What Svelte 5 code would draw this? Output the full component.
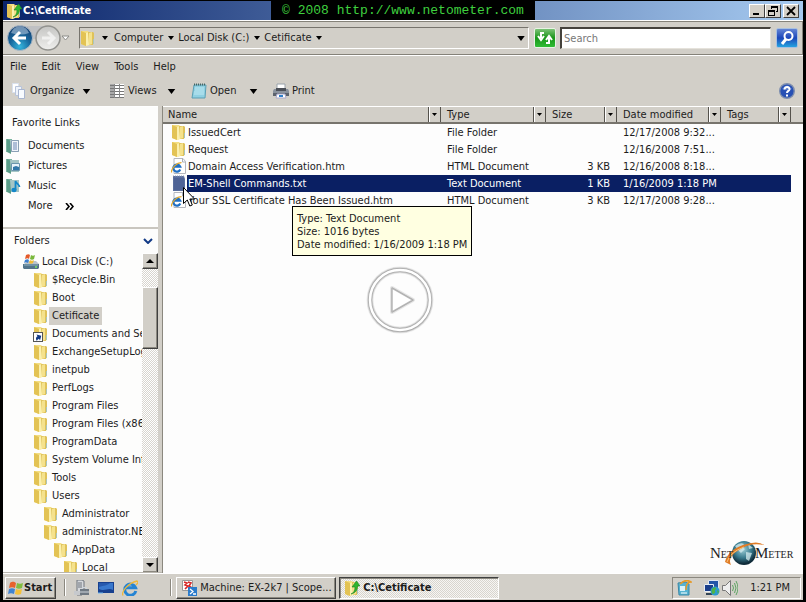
<script lang="ts">
  const menus = ['File', 'Edit', 'View', 'Tools', 'Help'];
  const crumbs = ['Computer', 'Local Disk (C:)', 'Cetificate'];

  const columns = [
    { label: 'Name', cls: 'name' },
    { label: 'Type', cls: 'type' },
    { label: 'Size', cls: 'size' },
    { label: 'Date modified', cls: 'date' },
    { label: 'Tags', cls: 'tags' },
  ];

  const files = [
    { name: 'IssuedCert', icon: 'folder', type: 'File Folder', size: '', date: '12/17/2008 9:32...' },
    { name: 'Request', icon: 'folder', type: 'File Folder', size: '', date: '12/16/2008 7:51...' },
    { name: 'Domain Access Verification.htm', icon: 'html', type: 'HTML Document', size: '3 KB', date: '12/16/2008 8:18...' },
    { name: 'EM-Shell Commands.txt', icon: 'text', type: 'Text Document', size: '1 KB', date: '1/16/2009 1:18 PM' },
    { name: 'Your SSL Certificate Has Been Issued.htm', icon: 'html', type: 'HTML Document', size: '3 KB', date: '12/17/2008 9:28...' },
  ];

  const tree = [
    { name: 'Local Disk (C:)', level: 0, icon: 'drive' },
    { name: '$Recycle.Bin', level: 1, icon: 'folder' },
    { name: 'Boot', level: 1, icon: 'folder' },
    { name: 'Cetificate', level: 1, icon: 'folder' },
    { name: 'Documents and Se', level: 1, icon: 'shortcut' },
    { name: 'ExchangeSetupLog', level: 1, icon: 'folder' },
    { name: 'inetpub', level: 1, icon: 'folder' },
    { name: 'PerfLogs', level: 1, icon: 'folder' },
    { name: 'Program Files', level: 1, icon: 'folder' },
    { name: 'Program Files (x86', level: 1, icon: 'folder' },
    { name: 'ProgramData', level: 1, icon: 'folder' },
    { name: 'System Volume Inf', level: 1, icon: 'folder' },
    { name: 'Tools', level: 1, icon: 'folder' },
    { name: 'Users', level: 1, icon: 'folder' },
    { name: 'Administrator', level: 2, icon: 'folder' },
    { name: 'administrator.NE', level: 2, icon: 'folder' },
    { name: 'AppData', level: 3, icon: 'folder' },
    { name: 'Local', level: 4, icon: 'folder' },
  ];

  let selected = $state('EM-Shell Commands.txt');
  let current = $state('Cetificate');
  let query = $state('');
</script>

{#snippet icon(kind: string)}
  <svg class="icon" width="16" height="16" viewBox="0 0 16 16" aria-hidden="true">
    {#if kind === 'folder' || kind === 'shortcut' || kind === 'folderup'}
      <path d="M1 1h7l1 1v13l-3 1-5-2z" fill="#f3de83" />
      <path d="M1 1l5 2v13l-5-2z" fill="#e3c354" />
      <path d="M6 3l3-1v13l-3 1z" fill="#fbf0ae" />
      <path d="M8 2h5l1 1v8l-1 4H9z" fill="#dfc25a" />
      <path d="M9 3l3-1v12l-3 1z" fill="#f5e28c" />
      <path d="M13 9h1v5h-1z" fill="#a9c5bd" />
      {#if kind === 'shortcut'}
        <rect x="0.5" y="6.5" width="9" height="9" fill="#fff" stroke="#555" />
        <path d="M2 14c0-3 1-4 3-4V8l3.500 3.500L5 15v-2c-1.500 0-2 0-3 1z" fill="#123a86" transform="rotate(-30 5 11)" />
      {/if}
      {#if kind === 'folderup'}
        <path d="M7 14c3-1 4-4 4-7H8l4.500-6L16 6h-2.500c0 4-2 7-6.500 8z" fill="#2fb52f" stroke="#1a8420" stroke-width="0.6" />
      {/if}
    {:else if kind === 'html'}
      <path d="M3 .5h9l2.500 3V15.500H3z" fill="#fff" stroke="#b4b7be" />
      <path d="M11.500 .5v3.500h3" fill="none" stroke="#a9adb5" />
      <path d="M9.200 11.500A3.600 3.600 0 1 1 9.200 8.700H3" fill="none" stroke="#1f6fc4" stroke-width="2.200" />
      <path d="M.5 14.500C0 10 6 4.500 10.500 4.700" fill="none" stroke="#e3a92d" stroke-width="1.200" />
    {:else if kind === 'text'}
      <path d="M2 1h11l1 3v12H2z" fill="#5b6f9e" />
      <path d="M3 4h10M3 6h10M3 8h10M3 10h10M3 12h10M3 14h10" stroke="#42588d" />
      <path d="M2 1h11" stroke="#8a98b8" stroke-dasharray="1 1" />
    {:else if kind === 'drive'}
      <path d="M1 10l3-3h9l3 3z" fill="#b9c3cc" />
      <path d="M0 10h16v4l-1 1H1l-1-1z" fill="#52748a" />
      <path d="M1 11h14" stroke="#8fb0bf" />
      <path d="M12 13h2" stroke="#7be35c" stroke-width="1.500" />
      <path d="M3 1c2-1 3-1 4 0L6 5C5 4 4 4 2 5z" fill="#e45a2a" />
      <path d="M8 1c1 1 3 1 4 0l-1 4c-1 1-3 1-4 0z" fill="#79b83b" />
      <path d="M2 6c2-1 3-1 4 0l-1 3c-1-1-3-1-4 0z" fill="#3a7fd0" />
      <path d="M7 6c1 1 3 1 4 0l-1 3c-1 1-3 1-4 0z" fill="#f1bd34" />
    {:else if kind === 'documents' || kind === 'pictures' || kind === 'music'}
      <path d="M0 1h6v13H0z" fill="#7ab5a0" />
      <path d="M1 1l4 2v13l-4-2z" fill="#5a9c89" />
      <path d="M4 2h9v12H5z" fill="#a4c5c5" />
      {#if kind === 'documents'}
        <path d="M5.500 2.500h7v11h-7z" fill="#f1f5fa" stroke="#8aa0b5" />
        <path d="M7 5h4M7 7h4M7 9h4M7 11h4" stroke="#6d86b4" />
      {:else if kind === 'pictures'}
        <path d="M5.500 5.500h8v7h-8z" fill="#e8f3fa" stroke="#6b96ad" />
        <path d="M7 9l3-1 3 1v3H7z" fill="#3278a9" />
      {:else}
        <path d="M9.500 12V3c1 3 4 3 4 6" fill="none" stroke="#1487c9" stroke-width="1.800" />
        <ellipse cx="8" cy="12" rx="2.600" ry="2.200" fill="#1487c9" />
      {/if}
    {:else if kind === 'organize'}
      <path d="M1.500.5h6v9h-6z" fill="#fff" stroke="#d9e1ee" />
      <path d="M4.500 3.500h6v9h-6z" fill="#eef3fb" stroke="#b8c4da" />
      <path d="M7.500 6.500h6v9h-6z" fill="#f8fbff" stroke="#a9b6d0" />
    {:else if kind === 'views'}
      <path d="M1 1h4v14H1z" fill="#aaa" />
      <path d="M6 1h9v14H6z" fill="#fff" />
      <path d="M1 2.500h14M1 5.500h14M1 8.500h14M1 11.500h14M1 14.500h14" stroke="#777" />
      <path d="M5.500 1v14M10.500 1v14" stroke="#888" />
    {:else if kind === 'open'}
      <path d="M3 2h12l-1 13H1z" fill="#8fd0e2" stroke="#5b9fb4" />
      <path d="M4 5h9M4 7h9M3 9h10M3 11h10" stroke="#bfe8f2" />
      <path d="M3 1.500h12" stroke="#466" stroke-width="2" stroke-dasharray="1 1" />
    {:else if kind === 'print'}
      <path d="M4 1h8v6H4z" fill="#fff" stroke="#9aa3ac" />
      <path d="M1 6h14l1 2v5H0V8z" fill="#8a929d" />
      <path d="M0 10h16v3H0z" fill="#5c636d" />
      <path d="M3 5h10v3H3z" fill="#4b5058" />
      <path d="M4 11h8l1 4H3z" fill="#fff" stroke="#aac" />
      <path d="M6 13h4" stroke="#2f7fca" stroke-width="2" />
    {:else if kind === 'server'}
      <path d="M3 0h5l2 1v12l-2 2H3z" fill="#d5d8dc" stroke="#6e747c" />
      <path d="M4 3h4M4 5h4M4 7h4" stroke="#6e747c" />
      <path d="M0 11h6v4H0z" fill="#c6c9cd" />
      <path d="M6 9h9v6H6z" fill="#6e7882" />
      <path d="M8.500 9V7.500h4V9M6 12h9" fill="none" stroke="#cfd6dd" />
    {:else if kind === 'desktop'}
      <path d="M0 2h16v11H0z" fill="#17408f" />
      <path d="M1 3h14v7c-5-3-8 2-14-1z" fill="#3978cd" />
      <path d="M1 3h11c-3 3-6 2-11 4z" fill="#2759ad" />
      <path d="M0 13h5" stroke="#6fb8f0" />
    {:else if kind === 'ie'}
      <path d="M13.800 11A5.600 5.600 0 1 1 13.600 7.800H4" fill="none" stroke="#2584d3" stroke-width="3" />
      <path d="M1 15.500C-1 12 6 3 15 1c2 1 0 3-1 4" fill="none" stroke="#eeb83a" stroke-width="1.300" />
    {:else if kind === 'exchange'}
      <path d="M1.500.5h10v10h-10z" fill="#fff" stroke="#999" />
      <path d="M3 2l3 1-2 2 3 1-3 3M7 2l3 1-2 3 3 2" fill="none" stroke="#d72626" stroke-width="1.600" />
      <path d="M7 7h9v9H7z" fill="#2a7bcb" />
      <path d="M9 9l3 2.500L9 14M12 14h3" fill="none" stroke="#fff" stroke-width="1.300" />
    {:else if kind === 'update'}
      <path d="M2 3l8-1 3 2v11H3z" fill="#57b3d1" stroke="#3987a7" />
      <path d="M4 6h5v5H4z" fill="#d9f3fb" />
      <path d="M5 13h6" stroke="#fff" />
      <path d="M4 4c4-4 8-4 11-2-4 0-5 3-5 8" fill="none" stroke="#e59a28" stroke-width="1.600" />
    {:else if kind === 'network'}
      <path d="M4.500.5h10v8h-10z" fill="#2355a8" stroke="#dfe7f2" />
      <path d="M.5 4.500h9v7h-9z" fill="#1b3f8b" stroke="#e6edf5" />
      <path d="M2 14h7" stroke="#345" stroke-width="2" />
      <circle cx="11" cy="11" r="4.500" fill="#2a9bd1" />
      <path d="M8 9c2-2 3-2 4-1s-2 2-1 3-1 3-2 3-2-3-1-5zM13 10l2 1-1 3z" fill="#4fb347" />
    {:else if kind === 'sound'}
      <path d="M.5 5.500h3l5-5v15l-5-5h-3z" fill="#eee" stroke="#777" />
      <path d="M10.500 5q2 3 0 6M12.500 3q3 5 0 10M14 1q4 7 0 14" fill="none" stroke="#5da562" />
    {:else if kind === 'flag'}
      <path d="M2 3c3-2 4-1 6 0L7 8C5 7 3 7 1 8z" fill="#e7622d" />
      <path d="M9 3c2 1 4 1 6 0l-1 5c-2 1-4 1-6 0z" fill="#82bc40" />
      <path d="M1 9c2-1 4-1 6 0l-1 5c-2-1-4-1-6 0z" fill="#3f83d2" />
      <path d="M8 9c2 1 4 1 6 0l-1 5c-2 1-4 1-6 0z" fill="#f4c03b" />
    {/if}
  </svg>
{/snippet}

{#snippet caret()}
  <svg class="caret" width="6" height="4" viewBox="0 0 6 4" aria-hidden="true"><path d="M0 0h6L3 4z" /></svg>
{/snippet}

<div class="screen">
  <header class="titlebar">
    {@render icon('folderup')}
    <h1>C:\Cetificate</h1>
    <div class="window-buttons">
      <button aria-label="Minimize"><svg width="12" height="10"><path d="M2 7h6v2H2z" /></svg></button>
      <button aria-label="Restore"><svg width="12" height="10"><path d="M4 0h7v6H9V5h1V2H5v1H4zM1 4h7v6H1zM2 6v3h5V6z" fill-rule="evenodd" /></svg></button>
      <button class="close" aria-label="Close"><svg width="12" height="10"><path d="M2 1l8 8M10 1L2 9" stroke="#000" stroke-width="1.800" /></svg></button>
    </div>
    <p class="watermark">© 2008 http://www.netometer.com</p>
  </header>

  <nav class="address">
    <div class="history">
      <svg width="66" height="28" viewBox="0 0 66 28" aria-hidden="true">
        <defs>
          <radialGradient id="back" cx="50%" cy="85%" r="85%">
            <stop offset="0" stop-color="#35b5dd" />
            <stop offset=".5" stop-color="#17669c" />
            <stop offset="1" stop-color="#143c6c" />
          </radialGradient>
          <linearGradient id="forward" x2="0" y2="1">
            <stop offset="0" stop-color="#c5c5c3" />
            <stop offset="1" stop-color="#efefed" />
          </linearGradient>
        </defs>
        <path d="M10 2h34v3q-14 2-14 10H10z" fill="#bfc0c2" />
        <circle cx="13" cy="14" r="12.500" fill="url(#back)" stroke="#aebac6" />
        <path d="M4 9q2-6 9-7 7 1 9 7-8 3-18 0z" fill="#bcd2e5" opacity=".55" />
        <path d="M19 14H8M13 8l-6 6 6 6" fill="none" stroke="#fff" stroke-width="3" />
        <circle cx="41" cy="14" r="12" fill="url(#forward)" stroke="#92928e" stroke-width="1.500" />
        <path d="M35 14h11M41 8l6 6-6 6" fill="none" stroke="#fff" stroke-width="3" opacity=".6" />
        <path d="M55 12h7l-3.500 4z" fill="#fff" stroke="#8c8c88" />
      </svg>
    </div>
    <div class="breadcrumb">
      {@render icon('folder')}
      <button class="drop" aria-label="Root locations">{@render caret()}</button>
      {#each crumbs as crumb}
        <a href="#{crumb}">{crumb}</a>
        <button class="drop" aria-label="Open {crumb}">{@render caret()}</button>
      {/each}
      <button class="drop last" aria-label="Previous locations">{@render caret()}</button>
    </div>
    <button class="refresh" aria-label="Refresh">
      <svg width="20" height="18" viewBox="0 0 20 18"><path d="M9 4H6v5M3 7l3 4 3-4M11 14h3V9M11 11l3-4 3 4" fill="none" stroke="#fff" stroke-width="2" /></svg>
    </button>
    <input class="search" type="text" placeholder="Search" aria-label="Search" bind:value={query} />
    <button class="go" aria-label="Start search">
      <svg width="20" height="18" viewBox="0 0 20 18"><circle cx="11.500" cy="7" r="4" fill="none" stroke="#fff" stroke-width="2" /><path d="M9 10l-4 5" stroke="#fff" stroke-width="3" /></svg>
    </button>
  </nav>

  <div class="menubar">
    {#each menus as menu}
      <button>{menu}</button>
    {/each}
  </div>

  <div class="toolbar">
    <button class="tool wide">{@render icon('organize')}<span>Organize</span>{@render caret()}</button>
    <button class="tool">{@render icon('views')}<span>Views</span>{@render caret()}</button>
    <button class="tool">{@render icon('open')}<span>Open</span>{@render caret()}</button>
    <button class="tool">{@render icon('print')}<span>Print</span></button>
    <button class="help" aria-label="Help">
      <svg width="16" height="16" viewBox="0 0 16 16"><circle cx="8" cy="8" r="7.300" fill="#2750b4" stroke="#7d8eae" stroke-width="1.400" /><path d="M3 6q5-7 10 0-5 2-10 0z" fill="#7498dc" opacity=".6" /><path d="M5.500 6.500C5.500 3 11 3.500 10.500 6.500 10 8 8 8 8 10M8 11.500v2" fill="none" stroke="#fff" stroke-width="2" /></svg>
    </button>
  </div>

  <main>
    <aside>
      <section class="favorites">
        <h2>Favorite Links</h2>
        <ul>
          <li>{@render icon('documents')}<a href="#documents">Documents</a></li>
          <li>{@render icon('pictures')}<a href="#pictures">Pictures</a></li>
          <li>{@render icon('music')}<a href="#music">Music</a></li>
          <li class="more">
            <a href="#more">More</a>
            <svg width="9" height="7" viewBox="0 0 9 7" aria-hidden="true"><path d="M1 0l3 3.500L1 7M5 0l3 3.500L5 7" fill="none" stroke="#000" stroke-width="1.600" /></svg>
          </li>
        </ul>
      </section>
      <button class="folders-toggle">
        <span>Folders</span>
        <svg width="10" height="6" viewBox="0 0 10 6" aria-hidden="true"><path d="M1 1l4 4 4-4" fill="none" stroke="#123a86" stroke-width="2" /></svg>
      </button>
      <div class="tree-wrap">
        <ul class="tree">
          {#each tree as node}
            <li class="level-{node.level}">
              {@render icon(node.icon)}
              <button class:current={node.name === current} onclick={() => (current = node.name)}>{node.name}</button>
            </li>
          {/each}
        </ul>
        <div class="scrollbar">
          <button aria-label="Scroll up"><svg width="8" height="4"><path d="M0 4h8L4 0z" /></svg></button>
          <div class="track"><div class="thumb"></div></div>
          <button aria-label="Scroll down"><svg width="8" height="4"><path d="M0 0h8L4 4z" /></svg></button>
        </div>
      </div>
    </aside>

    <section class="list">
      <table>
        <thead>
          <tr>
            {#each columns as col}
              <th class={col.cls}>
                <div class="head">
                  <span>{col.label}</span>
                  <button aria-label="Filter {col.label}"><svg width="5" height="3"><path d="M0 0h5L2.500 3z" /></svg></button>
                </div>
              </th>
            {/each}
            <th><div class="head"></div></th>
          </tr>
        </thead>
        <tbody>
          {#each files as file}
            <tr class:selected={file.name === selected} onclick={() => (selected = file.name)}>
              <td><div class="file">{@render icon(file.icon)}<span>{file.name}</span></div></td>
              <td>{file.type}</td>
              <td class="size">{file.size}</td>
              <td class="date">{file.date}</td>
              <td></td>
              <td class="rest"></td>
            </tr>
          {/each}
        </tbody>
      </table>

      <div class="tooltip" role="tooltip">
        <p>Type: Text Document</p>
        <p>Size: 1016 bytes</p>
        <p>Date modified: 1/16/2009 1:18 PM</p>
      </div>

      <svg class="cursor" width="12" height="20" viewBox="0 0 12 20" aria-hidden="true">
        <path d="M.5.500v16l3.800-3.500 2.500 6 2.500-1-2.500-6h4.700z" fill="#fff" stroke="#000" />
      </svg>

      <svg class="logo" width="84" height="30" viewBox="0 0 84 30" role="img" aria-label="NetoMeter">
        <defs>
          <radialGradient id="globe" cx="45%" cy="35%" r="60%">
            <stop offset="0" stop-color="#9fd0d8" />
            <stop offset=".6" stop-color="#38798c" />
            <stop offset="1" stop-color="#0e2a38" />
          </radialGradient>
        </defs>
        <circle cx="34" cy="14" r="12" fill="url(#globe)" />
        <path d="M25 7q5-4 9-2l-2 3 3 2-4 4-3-3zM36 13l6 1-3 8-3-2zM38 5l5 4-4 1z" fill="#d7eef0" opacity=".75" />
        <path d="M15 23q2-11 18-17 15-5 21 0-14-3-25 5Q17 18 21 26z" fill="#e07c26" />
        <path d="M17 23q3-10 17-15" fill="none" stroke="#f9c37c" />
        <text x="0" y="19" class="logo-text">N<tspan class="logo-small">ET</tspan></text>
        <text x="45" y="19" class="logo-text">M<tspan class="logo-small">ETER</tspan></text>
      </svg>
    </section>
  </main>

  <footer class="taskbar">
    <button class="start">{@render icon('flag')}Start</button>
    <div class="divider"></div>
    <div class="quick">
      <button aria-label="Server Manager">{@render icon('server')}</button>
      <button aria-label="Show desktop">{@render icon('desktop')}</button>
      <button aria-label="Internet Explorer">{@render icon('ie')}</button>
    </div>
    <div class="divider end"></div>
    <button class="task">{@render icon('exchange')}<span>Machine: EX-2k7 | Scope...</span></button>
    <button class="task active">{@render icon('folderup')}<span>C:\Cetificate</span></button>
    <div class="tray">
      {@render icon('update')}
      <span class="pair">{@render icon('network')}{@render icon('sound')}</span>
      <time>1:21 PM</time>
    </div>
  </footer>

  <div class="player">
    <button aria-label="Play">
      <svg width="72" height="72" viewBox="0 0 72 72">
        <g fill="none" stroke="#888">
          <circle cx="36" cy="36" r="30" stroke-width="7" opacity=".15" />
          <circle cx="36" cy="36" r="30" stroke-width="5.500" opacity=".3" />
          <circle cx="36" cy="36" r="30" stroke-width="4" opacity=".5" />
          <circle cx="36" cy="36" r="30" stroke="#fff" stroke-width="2.500" />
          <path d="M28 24v24l21-12z" stroke-width="4" opacity=".2" stroke-linejoin="round" />
        </g>
        <path d="M28 24v24l21-12z" fill="#fff" stroke="#888" stroke-opacity=".6" stroke-width="1.500" stroke-linejoin="round" />
      </svg>
    </button>
  </div>
</div>

<style>
:global(body) {
  margin: 0;
  background: #000;
}

.screen {
  position: relative;
  display: flex;
  flex-direction: column;
  box-sizing: border-box;
  height: 100vh;
  padding: 1px 3px 2px;
  background: #000;
  color: #1c1c1c;
  font: 11px/14px "DejaVu Sans Condensed", "Noto Sans", sans-serif;
}

button {
  padding: 0;
  border: 0;
  background: none;
  color: inherit;
  font: inherit;
}

h1, h2, p, ul {
  margin: 0;
  padding: 0;
  font: inherit;
  list-style: none;
}

a {
  color: inherit;
  text-decoration: none;
}

svg {
  display: block;
  flex: none;
}

.titlebar {
  position: relative;
  display: flex;
  align-items: center;
  flex: none;
  height: 19px;
  padding: 0 4px 0 3px;
  background: linear-gradient(90deg, #0a246a, #a6caf0);
}

.titlebar h1 {
  flex: 1;
  padding-left: 1px;
  color: #fff;
  font-weight: bold;
}

.window-buttons {
  display: flex;
}

.window-buttons button {
  display: flex;
  align-items: center;
  justify-content: center;
  width: 16px;
  height: 14px;
  box-sizing: border-box;
  border: 1px solid;
  border-color: #fff #404040 #404040 #fff;
  background: #d4d0c8;
}

.window-buttons .close {
  margin-left: 2px;
}

.watermark {
  position: absolute;
  top: -1px;
  left: calc(50% - 132px);
  width: 264px;
  height: 20px;
  background: #000;
  color: #3fd03f;
  font: 13px/22px "Liberation Mono", monospace;
  text-align: center;
  white-space: nowrap;
}

.address {
  display: flex;
  align-items: center;
  flex: none;
  box-sizing: border-box;
  height: 36px;
  padding: 0 5px 0 4px;
  border-top: 1px solid #fff;
  border-bottom: 1px solid #fff;
  background: #d2cfc8;
  box-shadow: inset 0 1px #858279, inset 0 -1px #858279, inset -1px 0 #858279;
}

.history {
  width: 72px;
}

.breadcrumb {
  display: flex;
  align-items: center;
  flex: 1;
  min-width: 0;
  box-sizing: border-box;
  height: 22px;
  border: 1px solid;
  border-color: #77746d #fff #fff #77746d;
  white-space: nowrap;
}

.drop {
  display: flex;
  justify-content: center;
  width: 15px;
}

.breadcrumb > .icon + .drop {
  width: 18px;
}

.drop.last {
  margin-left: auto;
}

.drop.last .caret {
  width: 8px;
  height: 5px;
}

.refresh,
.go {
  display: flex;
  align-items: center;
  justify-content: center;
  box-sizing: border-box;
  width: 22px;
  height: 20px;
  margin-left: 5px;
  border: 1px solid #e8f2e4;
  border-radius: 2px;
  background: linear-gradient(#7cc276, #189518 50%, #30bd35);
}

.go {
  border-color: #a8c0e0;
  background: linear-gradient(#6384d4, #1c46ba 50%, #24a3df);
}

.search {
  box-sizing: border-box;
  width: 211px;
  height: 22px;
  margin-left: 4px;
  padding: 0 2px;
  border: 2px solid;
  border-color: #45423c #e5e2db #e5e2db #45423c;
  border-width: 2px 1px 1px 2px;
  background: #fff;
  color: #222;
  font: inherit;
}

.search::placeholder {
  color: #777;
  opacity: 1;
}

.menubar {
  display: flex;
  flex: none;
  gap: 1px;
  height: 20px;
  padding-top: 1px;
  box-sizing: border-box;
  background: #d2cfc8;
}

.menubar button {
  padding: 0 7px;
}

.toolbar {
  display: flex;
  flex: none;
  height: 30px;
  padding: 0 8px;
  background: #d2cfc8;
}

.tool {
  display: flex;
  align-items: center;
  gap: 3px;
  width: 82px;
}

.tool.wide {
  width: 98px;
}

.tool .caret {
  width: 9px;
  height: 5px;
  margin-left: auto;
  margin-right: 15px;
}

.tool.wide .caret {
  margin-right: 18px;
}

.help {
  margin-left: auto;
}

main {
  display: flex;
  flex: 1;
  min-height: 0;
  background: #d2cfc8;
}

aside {
  display: flex;
  flex-direction: column;
  width: 155px;
  margin-right: 4px;
  background: #fdfdfc;
}

.favorites {
  flex: none;
  box-sizing: border-box;
  height: 123px;
  padding-top: 9px;
  border-top: 1px solid #fff;
  border-bottom: 2px solid #c9c6bf;
}

.favorites h2 {
  margin-bottom: 6px;
  padding-left: 9px;
}

.favorites li {
  display: flex;
  align-items: center;
  gap: 6px;
  height: 20px;
  padding-left: 3px;
}

.favorites .more {
  gap: 12px;
  padding-left: 25px;
}

.folders-toggle {
  display: flex;
  align-items: center;
  justify-content: space-between;
  flex: none;
  height: 24px;
  padding: 0 5px 0 11px;
}

.tree-wrap {
  display: flex;
  flex: 1;
  min-height: 0;
}

.tree {
  flex: 1;
  min-width: 0;
  overflow: hidden;
}

.tree li {
  display: flex;
  align-items: center;
  height: 18px;
  white-space: nowrap;
}

.tree button {
  flex: none;
  height: 18px;
  padding: 0 3px;
}

.tree .current {
  background: #d2cfc8;
}

.level-0 { padding-left: 20px; }
.level-1 { padding-left: 30px; }
.level-2 { padding-left: 40px; }
.level-3 { padding-left: 50px; }
.level-4 { padding-left: 60px; }

.scrollbar {
  display: flex;
  flex-direction: column;
  width: 16px;
}

.scrollbar button,
.thumb {
  box-sizing: border-box;
  border: 1px solid;
  border-color: #fff #404040 #404040 #fff;
  background: #d2cfc8;
  box-shadow: inset -1px -1px #8b887f;
}

.scrollbar button {
  display: flex;
  align-items: center;
  justify-content: center;
  flex: none;
  height: 16px;
}

.track {
  flex: 1;
  padding-top: 18px;
  background: repeating-conic-gradient(#fff 0 25%, #d8d5ce 0 50%) 0 0 / 2px 2px;
}

.thumb {
  height: 62px;
}

.list {
  position: relative;
  flex: 1;
  min-width: 0;
  border-left: 1px solid #8b887f;
  background: #fdfdfd;
}

table {
  width: 100%;
  border-collapse: collapse;
  table-layout: fixed;
}

th, td {
  padding: 0;
  font-weight: normal;
  text-align: left;
  white-space: nowrap;
}

th.name { width: 278px; }
th.type { width: 105px; }
th.size { width: 71px; }
th.date { width: 104px; }
th.tags { width: 70px; }

.head {
  display: flex;
  box-sizing: border-box;
  height: 18px;
  border-top: 1px solid #fff;
  border-bottom: 2px solid #77746d;
  background: #d2cfc8;
}

.head span {
  flex: 1;
  padding: 1px 0 0 6px;
}

.name .head span {
  padding-left: 5px;
}

.head button {
  display: flex;
  align-items: center;
  justify-content: center;
  width: 13px;
  border: 1px solid #55524c;
  border-width: 0 1px;
  box-shadow: inset 1px 0 #fff;
}

tbody tr {
  height: 17px;
}

tbody td {
  padding-left: 6px;
}

tbody td:first-child {
  padding-left: 8px;
}

.file {
  display: flex;
}

.file span {
  flex: 1;
  height: 17px;
  padding-left: 1px;
  line-height: 17px;
}

td.size {
  padding-right: 7px;
  text-align: right;
}

.selected td {
  background: #0a1f63;
  color: #fff;
}

.selected td:first-child,
.selected td.rest {
  background: none;
}

.selected .file span {
  background: #0a1f63;
}

.tooltip {
  position: absolute;
  top: 100px;
  left: 129px;
  padding: 5px 4px 4px;
  border: 1px solid #000;
  background: #ffffe1;
  line-height: 13px;
  white-space: nowrap;
}

.cursor {
  position: absolute;
  top: 81px;
  left: 20px;
}

.logo {
  position: absolute;
  right: 9px;
  bottom: 4px;
}

.logo-text {
  fill: #222;
  font: 15px "Liberation Serif", serif;
}

.logo-small {
  font-size: 10px;
}

.taskbar {
  display: flex;
  align-items: center;
  flex: none;
  height: 23px;
  padding: 2px 2px 1px;
  border-top: 1px solid #fff;
  background: #d2cfc8;
  box-shadow: 0 -1px #b9b6af;
}

.start,
.task {
  display: flex;
  align-items: center;
  box-sizing: border-box;
  height: 22px;
  border: 1px solid;
  border-color: #fff #404040 #404040 #fff;
  box-shadow: inset -1px -1px #8b887f;
}

.start {
  padding: 0 3px 0 2px;
  font-weight: bold;
}

.divider {
  width: 1px;
  height: 17px;
  margin: 0 8px;
  border-right: 1px solid #fff;
  background: #8b887f;
}

.divider.end {
  margin-right: 4px;
}

.quick {
  display: flex;
  gap: 8px;
  margin-right: 24px;
}

.task {
  gap: 3px;
  width: 160px;
  min-width: 0;
  margin-right: 3px;
  padding-left: 4px;
  white-space: nowrap;
}

.task.active {
  border-color: #404040 #fff #fff #404040;
  background: repeating-conic-gradient(#f6f5f3 0 25%, #d8d5ce 0 50%) 0 0 / 2px 2px;
  box-shadow: inset 1px 1px #8b887f;
  font-weight: bold;
}

.tray {
  display: flex;
  align-items: center;
  gap: 12px;
  box-sizing: border-box;
  height: 22px;
  margin-left: auto;
  padding: 0 10px 0 3px;
  border: 1px solid;
  border-color: #8b887f #fff #fff #8b887f;
}

.pair {
  display: flex;
  gap: 2px;
}

.player {
  position: absolute;
  inset: 0 6px 2px 0;
  display: flex;
  align-items: center;
  justify-content: center;
  pointer-events: none;
}

.player button {
  pointer-events: auto;
}
</style>
